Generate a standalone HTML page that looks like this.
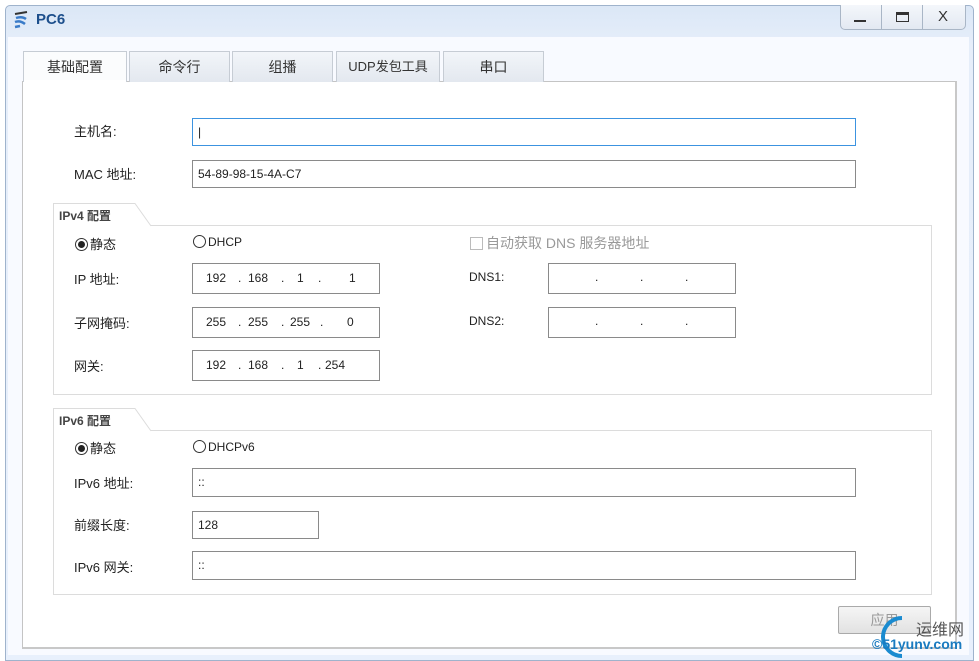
<!DOCTYPE html>
<html><head><meta charset="utf-8"><style>
*{margin:0;padding:0;box-sizing:border-box}
body{width:979px;height:661px;background:#fff;position:relative;overflow:hidden;font-family:"Liberation Sans","Noto Sans CJK SC",sans-serif;font-size:13px;color:#222}
.a{position:absolute}
.win{left:5px;top:5px;width:969px;height:656px;background:linear-gradient(#dbe7f6,#e6eefa 40px,#e8f0fc);border:1px solid #9fb3cc;border-radius:5px 5px 0 0}
.client{left:8px;top:37px;width:961px;height:618px;background:#f8faff}
.panel{left:22px;top:81px;width:935px;height:568px;background:#fff;border:1px solid #c4c4c4;border-right:2px solid #c8c8c8;border-bottom:2px solid #c8c8c8}
.tab{top:51px;height:31px;background:linear-gradient(#f2f5f9,#e3e8ef);border:1px solid #c6ccd4;border-bottom:none;text-align:center;line-height:30px;font-size:14px;color:#333}
.in{background:#fff;border:1px solid #8a8a8a;font-size:12px;padding-left:5px;line-height:26px}
.lbl{font-size:13px;color:#222}
.grp{border:1px solid #dcdcdc}
.gl{font-size:12px;font-weight:bold;color:#444}
.radio{width:13px;height:13px;border:1px solid #333;border-radius:50%;display:inline-block;vertical-align:-2px;margin-right:2px;position:relative}
.radio.on:after{content:"";position:absolute;left:2px;top:2px;width:7px;height:7px;border-radius:50%;background:#222}
.btn{border:1px solid #aaa;border-radius:2px;background:linear-gradient(#f5f5f5,#e2e2e2)}
.ip span{position:absolute;top:0}
</style></head><body>
<div class="a win"></div>
<svg class="a" style="left:12px;top:10px" width="22" height="20"><path d="M3 4 L15 2" stroke="#333" stroke-width="2"/><path d="M4 8 Q10 6 14 9 M3 12 Q8 10 13 14 M3 17 L8 16" stroke="#3a7bc8" stroke-width="2.5" fill="none"/></svg>
<div class="a" style="left:36px;top:11px;font-size:15px;font-weight:bold;color:#1d4f8c">PC6</div>
<div class="a" style="left:840px;top:5px;width:126px;height:25px;border:1px solid #a9b6c6;border-top:none;border-radius:0 0 5px 5px;background:linear-gradient(#f4f7fb,#e3e9f2)"></div>
<div class="a" style="left:881px;top:5px;width:1px;height:25px;background:#a9b6c6"></div>
<div class="a" style="left:922px;top:5px;width:1px;height:25px;background:#a9b6c6"></div>
<div class="a" style="left:854px;top:20px;width:12px;height:2px;background:#333"></div>
<div class="a" style="left:896px;top:12px;width:13px;height:10px;border:1px solid #333;border-top:3px solid #333"></div>
<div class="a" style="left:938px;top:8px;font-size:15px;color:#333">X</div>
<div class="a client"></div>
<div class="a panel"></div>
<div class="a tab" style="left:23px;width:104px;background:#fbfcfd">基础配置</div>
<div class="a tab" style="left:129px;width:101px">命令行</div>
<div class="a tab" style="left:232px;width:101px">组播</div>
<div class="a tab" style="left:336px;width:104px;font-size:13px">UDP发包工具</div>
<div class="a tab" style="left:443px;width:101px">串口</div>
<div class="a" style="left:24px;top:80px;width:102px;height:3px;background:#fff"></div>

<div class="a lbl" style="left:74px;top:121px">主机名:</div>
<div class="a in" style="left:192px;top:118px;width:664px;height:28px;border-color:#3c93e0">|</div>
<div class="a lbl" style="left:74px;top:164px">MAC 地址:</div>
<div class="a in" style="left:192px;top:160px;width:664px;height:28px">54-89-98-15-4A-C7</div>

<div class="a grp" style="left:53px;top:225px;width:879px;height:170px"></div>
<svg class="a" style="left:53px;top:203px" width="100" height="24"><path d="M0.5 23 V0.5 H82 L98 23" fill="#fff" stroke="#dcdcdc"/></svg>
<div class="a gl" style="left:59px;top:207px">IPv4 配置</div>
<div class="a lbl" style="left:75px;top:234px"><span class="radio on"></span>静态</div>
<div class="a lbl" style="left:193px;top:235px;font-size:12px"><span class="radio"></span>DHCP</div>
<div class="a lbl" style="left:470px;top:233px;color:#999;font-size:14px"><span style="display:inline-block;width:13px;height:13px;border:1px solid #bbb;vertical-align:-2px;margin-right:3px"></span>自动获取 DNS 服务器地址</div>
<div class="a lbl" style="left:74px;top:269px">IP 地址:</div>
<div class="a in ip" style="left:192px;top:263px;width:188px;height:31px;line-height:28px"><span style="left:13px">192</span><span style="left:45px">.</span><span style="left:55px">168</span><span style="left:88px">.</span><span style="left:104px">1</span><span style="left:125px">.</span><span style="left:156px">1</span></div>
<div class="a lbl" style="left:74px;top:313px">子网掩码:</div>
<div class="a in ip" style="left:192px;top:307px;width:188px;height:31px;line-height:28px"><span style="left:13px">255</span><span style="left:45px">.</span><span style="left:55px">255</span><span style="left:88px">.</span><span style="left:97px">255</span><span style="left:127px">.</span><span style="left:154px">0</span></div>
<div class="a lbl" style="left:74px;top:356px">网关:</div>
<div class="a in ip" style="left:192px;top:350px;width:188px;height:31px;line-height:28px"><span style="left:13px">192</span><span style="left:45px">.</span><span style="left:55px">168</span><span style="left:88px">.</span><span style="left:104px">1</span><span style="left:125px">.</span><span style="left:132px">254</span></div>
<div class="a lbl" style="left:469px;top:270px;font-size:12px">DNS1:</div>
<div class="a in ip" style="left:548px;top:263px;width:188px;height:31px;line-height:26px"><span style="left:46px">.</span><span style="left:91px">.</span><span style="left:136px">.</span></div>
<div class="a lbl" style="left:469px;top:314px;font-size:12px">DNS2:</div>
<div class="a in ip" style="left:548px;top:307px;width:188px;height:31px;line-height:26px"><span style="left:46px">.</span><span style="left:91px">.</span><span style="left:136px">.</span></div>

<div class="a grp" style="left:53px;top:430px;width:879px;height:165px"></div>
<svg class="a" style="left:53px;top:408px" width="100" height="24"><path d="M0.5 23 V0.5 H82 L98 23" fill="#fff" stroke="#dcdcdc"/></svg>
<div class="a gl" style="left:59px;top:412px">IPv6 配置</div>
<div class="a lbl" style="left:75px;top:438px"><span class="radio on"></span>静态</div>
<div class="a lbl" style="left:193px;top:440px;font-size:12px"><span class="radio"></span>DHCPv6</div>
<div class="a lbl" style="left:74px;top:473px">IPv6 地址:</div>
<div class="a in" style="left:192px;top:468px;width:664px;height:29px">::</div>
<div class="a lbl" style="left:74px;top:515px">前缀长度:</div>
<div class="a in" style="left:192px;top:511px;width:127px;height:28px">128</div>
<div class="a lbl" style="left:74px;top:557px">IPv6 网关:</div>
<div class="a in" style="left:192px;top:551px;width:664px;height:29px">::</div>

<div class="a btn" style="left:838px;top:606px;width:93px;height:28px;text-align:center;line-height:26px;color:#999;font-size:14px">应用</div>
<svg class="a" style="left:872px;top:612px" width="40" height="48"><path d="M30 6 A18 18 0 1 0 30 44" fill="none" stroke="#1a8bd0" stroke-width="4"/></svg>
<div class="a" style="left:916px;top:616px;font-size:16px;color:#555">运维网</div>
<div class="a" style="left:872px;top:636px;font-size:14px;color:#1a7bc0;font-weight:bold">©51yunv.com</div>
</body></html>
